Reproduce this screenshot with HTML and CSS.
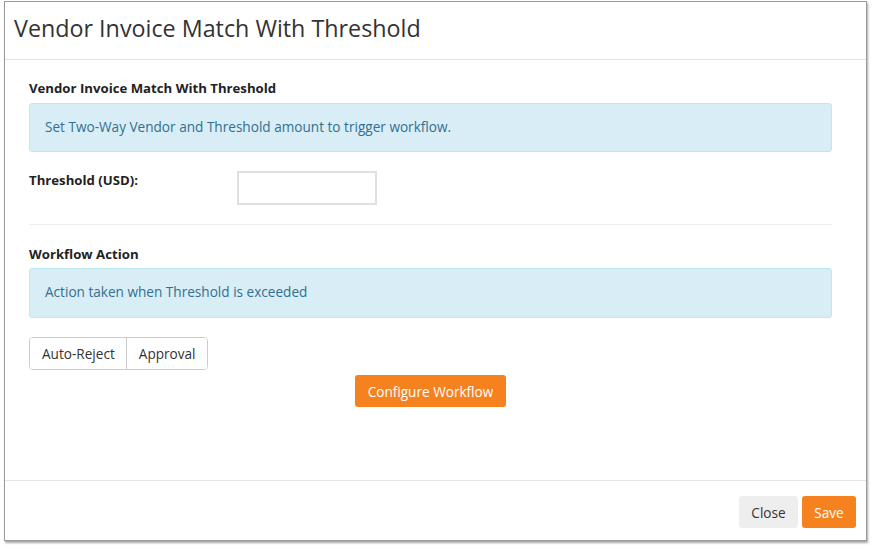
FILE: index.html
```html
<!DOCTYPE html>
<html>
<head>
<meta charset="utf-8">
<link rel="stylesheet" href="styles.css">
</head>
<body>
<div class="stage">
  <div class="modal">
    <div class="modal-header">
      <h1 class="modal-title">Vendor Invoice Match With Threshold</h1>
    </div>
    <div class="modal-body">
      <div class="section-label">Vendor Invoice Match With Threshold</div>
      <div class="alert">Set Two-Way Vendor and Threshold amount to trigger workflow.</div>
      <div class="form-row">
        <label class="field-label">Threshold (USD):</label>
        <input class="field-input" type="text">
      </div>
      <hr class="divider">
      <div class="section-label second">Workflow Action</div>
      <div class="alert tall">Action taken when Threshold is exceeded</div>
      <div class="btn-group">
        <button class="btn-seg">Auto-Reject</button>
        <button class="btn-seg">Approval</button>
      </div>
      <div class="center-row">
        <button class="btn-orange configure">Configure Workflow</button>
      </div>
    </div>
    <div class="modal-footer">
      <button class="btn-grey">Close</button>
      <button class="btn-orange save">Save</button>
    </div>
  </div>
</div>
</body>
</html>
```
FILE: styles.css
```css
* { box-sizing: border-box; }
html, body {
  margin: 0;
  padding: 0;
  background: #ffffff;
  font-family: "Open Sans", "Liberation Sans", sans-serif;
  color: #333333;
}
.stage {
  padding: 1px 0 0 4px;
  width: 872px;
  height: 549px;
}
.modal {
  width: 863px;
  height: 540px;
  background: #ffffff;
  border: 1px solid #9a9a9a;
  box-shadow: 1px 2px 2px rgba(0, 0, 0, 0.35);
  display: flex;
  flex-direction: column;
}
.modal-header {
  height: 58px;
  border-bottom: 1px solid #e5e5e5;
  padding: 0 0 0 9px;
  display: flex;
  align-items: center;
}
.modal-title {
  margin: 0;
  font-size: 23.3px;
  font-weight: 400;
  color: #333333;
  line-height: 30px;
  padding-bottom: 6px;
}
.modal-body {
  flex: 1;
  padding: 19px 34px 0 24px;
}
.section-label {
  font-size: 13.2px;
  font-weight: 700;
  line-height: 18px;
  color: #222222;
  margin-bottom: 6px;
}
.section-label.second {
  margin-bottom: 5px;
}
.alert {
  background: #d9edf7;
  border: 1px solid #bce8f1;
  border-radius: 3px;
  color: #31708f;
  font-size: 13.6px;
  line-height: 18px;
  padding: 14px 15px;
  height: 49px;
}
.alert.tall { height: 50px; }
.form-row {
  display: flex;
  align-items: flex-start;
  margin-top: 19px;
  height: 34px;
}
.field-label {
  width: 208px;
  font-size: 13.2px;
  font-weight: 700;
  line-height: 18px;
  color: #222222;
}
.field-input {
  width: 140px;
  height: 34px;
  border: 2px solid #e0e0e0;
  background: #ffffff;
  margin: 0;
  padding: 4px 8px;
  font-family: inherit;
  font-size: 13px;
  outline: none;
}
.divider {
  margin: 19px 0 0 0;
  border: 0;
  border-top: 1px solid #eeeeee;
  height: 0;
}
.divider + .section-label { margin-top: 20px; }
.btn-group {
  display: inline-flex;
  margin-top: 19px;
  border: 1px solid #cccccc;
  border-radius: 4px;
  height: 33px;
  overflow: hidden;
}
.btn-seg {
  border: 0;
  background: #ffffff;
  font-family: inherit;
  font-size: 13.6px;
  color: #333333;
  padding: 0 11px 0 12px;
  height: 31px;
  line-height: 31px;
}
.btn-seg + .btn-seg {
  border-left: 1px solid #cccccc;
}
.center-row {
  display: flex;
  justify-content: center;
  margin-top: 5px;
}
.btn-orange {
  background: #f5821f;
  color: #ffffff;
  border: 0;
  border-radius: 3px;
  font-family: inherit;
  font-size: 13.6px;
  height: 32px;
  padding: 0 12px;
}
.configure { width: 151px; padding: 0; }
.modal-footer {
  height: 60px;
  border-top: 1px solid #e5e5e5;
  display: flex;
  justify-content: flex-end;
  align-items: flex-start;
  gap: 4px;
  padding: 15px 10px 0 0;
}
.btn-grey {
  background: #eeeeee;
  color: #333333;
  border: 0;
  border-radius: 3px;
  font-family: inherit;
  font-size: 13.6px;
  height: 32px;
  width: 59px;
  padding: 0;
}
.save { width: 54px; padding: 0; }
```
